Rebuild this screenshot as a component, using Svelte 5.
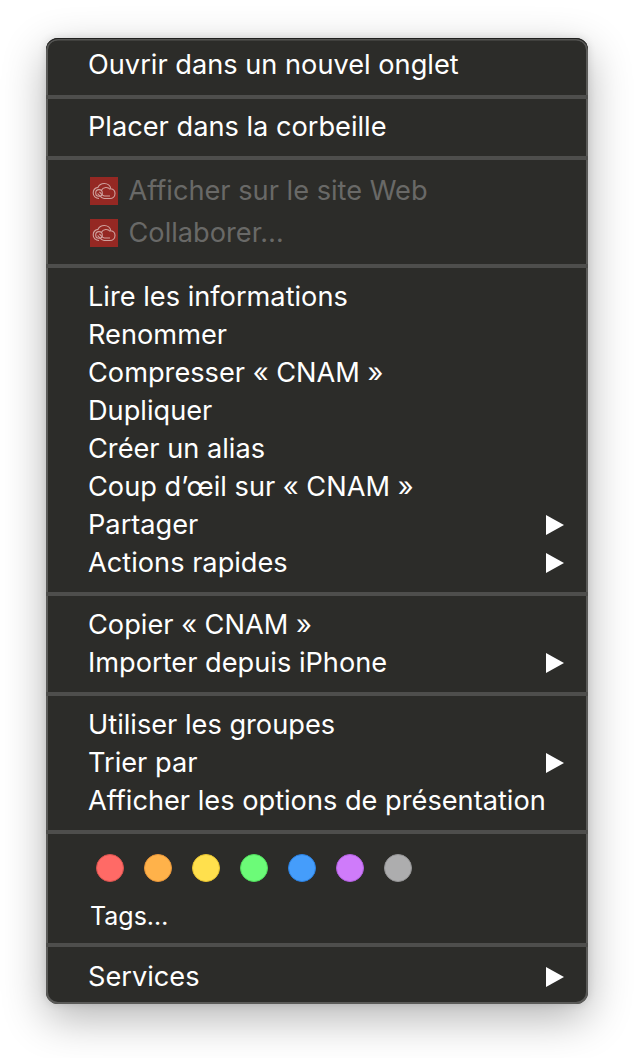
<script>
  const sections = [
    { items: [{ t: 'Ouvrir dans un nouvel onglet' }] },
    { items: [{ t: 'Placer dans la corbeille' }] },
    { kind: 'apps', items: [{ t: 'Afficher sur le site Web' }, { t: 'Collaborer…' }] },
    { items: [
      { t: 'Lire les informations' }, { t: 'Renommer' }, { t: 'Compresser « CNAM »' },
      { t: 'Dupliquer' }, { t: 'Créer un alias' }, { t: 'Coup d’œil sur « CNAM »' },
      { t: 'Partager', sub: true }, { t: 'Actions rapides', sub: true }
    ] },
    { items: [{ t: 'Copier « CNAM »' }, { t: 'Importer depuis iPhone', sub: true }] },
    { items: [{ t: 'Utiliser les groupes' }, { t: 'Trier par', sub: true }, { t: 'Afficher les options de présentation' }] },
    { kind: 'tags' },
    { items: [{ t: 'Services', sub: true }] }
  ];
  const tags = [
    ['#ff6a66', '#d9534f'], ['#ffb24a', '#e8963a'], ['#ffe04d', '#e6c22f'], ['#6cfb78', '#4fdc5c'],
    ['#459dfb', '#2a80e0'], ['#cf7bfa', '#b25fe0'], ['#adadae', '#949495']
  ];
</script>

<div class="page">
  <div class="menu">
    {#each sections as s}
      <section class={s.kind ?? ''}>
        {#if s.kind === 'tags'}
          <div class="dots">
            {#each tags as [fill, edge]}
              <span class="dot" style="background:{fill};border-color:{edge}"></span>
            {/each}
          </div>
          <div class="tagsLabel">Tags…</div>
        {:else}
          {#each s.items as item}
            <div class="row">
              {#if s.kind === 'apps'}
                <svg class="ccIcon" viewBox="0 0 28 28" aria-hidden="true">
                  <rect width="28" height="28" fill="#952823" />
                  <g fill="none" stroke="#cfa19d" stroke-width="1.1">
                    <path d="M9 21.500c-3.300 0-5.800-2.500-5.800-5.600 0-2.800 2-5 4.700-5.500C9 8.100 11.400 6.500 14.300 6.500c3.300 0 6 2.300 6.500 5.300 2.500.4 4.200 2.300 4.200 4.700 0 2.800-2.200 5-5 5h-6c-1.700 0-3-1.300-4.200-2.600l-2.200-2.400" />
                    <circle cx="9" cy="15.900" r="3.300" />
                    <path d="M11.300 13.400c1.800-3.500 6.600-3.900 9-.9 M20 19h-5.500c-1.200 0-2.200-1-3.200-2.100l-1.900-2.100" />
                  </g>
                </svg>
              {/if}
              <span class="label">{item.t}</span>
              {#if item.sub}
                <svg class="arrow" viewBox="0 0 18 20" aria-hidden="true"><path d="M0 0L18 10L0 20Z" fill="#fff" /></svg>
              {/if}
            </div>
          {/each}
        {/if}
      </section>
    {/each}
  </div>
</div>

<style>
  :global(body) { margin: 0; background: #fff; }
  .page {
    width: 634px;
    height: 1058px;
    box-sizing: border-box;
    padding: 38px 46px 0;
    overflow: hidden;
  }
  .menu {
    width: 542px;
    height: 966px;
    box-sizing: border-box;
    background: #2c2c29;
    border-radius: 12px;
    box-shadow: inset 0 1px 0 #1f1f1e, inset 0 2.5px 0 #555553, inset 0 0 0 2px #5a5a58, 0 14px 44px rgba(0, 0, 0, 0.3), 0 0 8px rgba(0, 0, 0, 0.12);
    font-family: Inter, "Liberation Sans", sans-serif;
    font-size: 27.2px;
    color: #fff;
    padding-top: 7.5px;
    overflow: hidden;
  }
  section {
    padding: 10px 0;
    border-bottom: 4px solid #4e4e4c;
  }
  section:nth-child(1) { padding-top: 0; padding-bottom: 11px; }
  section:nth-child(2) { padding-top: 9px; }
  section:last-child { border-bottom: 0; padding-top: 11px; padding-bottom: 0; }
  .row {
    height: 38px;
    display: flex;
    align-items: center;
    padding: 0 24px 0 42px;
    white-space: nowrap;
  }
  .apps .row { height: 42px; }
  .apps .label { color: #696967; margin-left: 11px; }
  .ccIcon { width: 28px; height: 28px; flex: none; margin-left: 1.5px; }
  .label { flex: 1; }
  .arrow { width: 18px; height: 20px; flex: none; }
  .dots {
    display: flex;
    gap: 20px;
    padding: 10px 0 0 50px;
  }
  .dot {
    width: 28px;
    height: 28px;
    box-sizing: border-box;
    border-radius: 50%;
    border: 1.5px solid;
  }
  .tagsLabel { padding: 18px 0 0 44px; height: 43px; line-height: 32px; font-size: 25px; }
  section.tags { padding-bottom: 0; }
</style>
